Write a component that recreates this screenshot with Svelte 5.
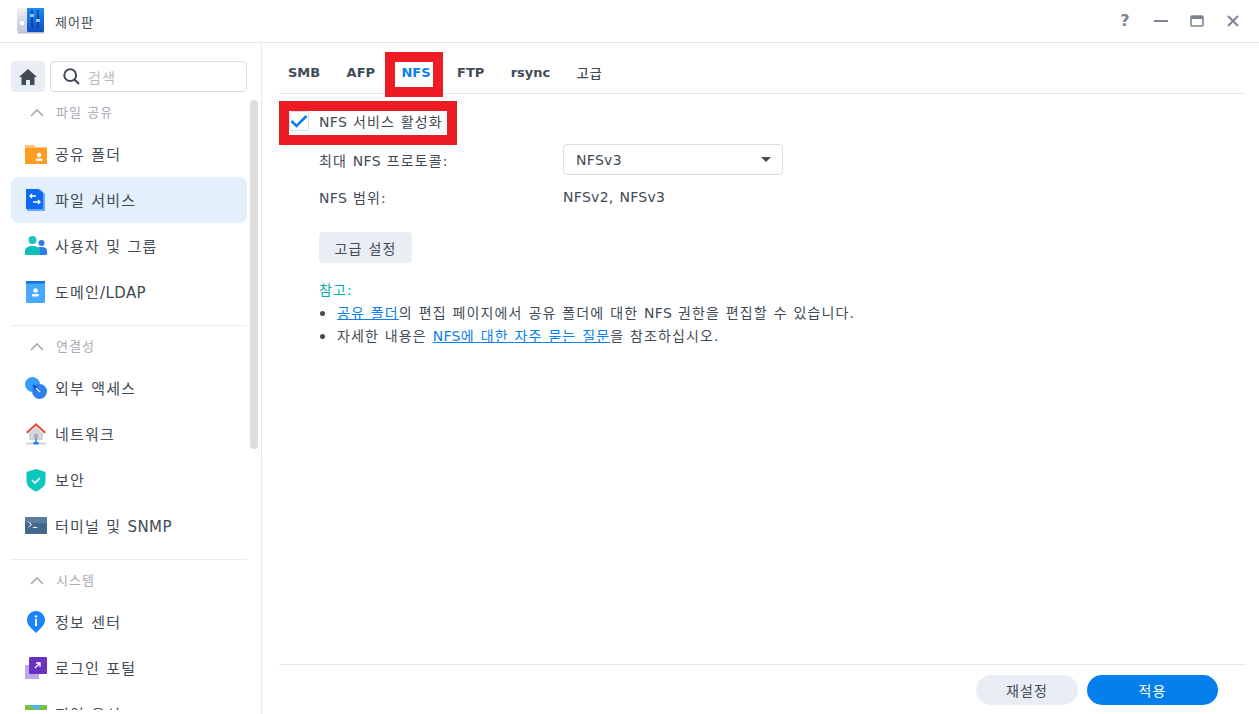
<script lang="ts">
  const groups = [
    { title: '파일 공유', items: [
      { id: 'folder', label: '공유 폴더' },
      { id: 'files', label: '파일 서비스', active: true },
      { id: 'users', label: '사용자 및 그룹' },
      { id: 'domain', label: '도메인/LDAP' },
    ]},
    { title: '연결성', items: [
      { id: 'external', label: '외부 액세스' },
      { id: 'network', label: '네트워크' },
      { id: 'security', label: '보안' },
      { id: 'terminal', label: '터미널 및 SNMP' },
    ]},
    { title: '시스템', items: [
      { id: 'info', label: '정보 센터' },
      { id: 'portal', label: '로그인 포털' },
      { id: 'region', label: '지역 옵션' },
    ]},
  ];
  const tabs = ['SMB', 'AFP', 'NFS', 'FTP', 'rsync', '고급'];

  // hangul runs get wider tracking than the latin ones
  function runs(s: string) {
    return s.split(/([\u3131-\uD7A3]+)/).filter(Boolean).map((t) => ({ t, ko: /[\u3131-\uD7A3]/.test(t) }));
  }
</script>

{#snippet txt(s)}{#each runs(s) as r}<span class:ko={r.ko}>{r.t}</span>{/each}{/snippet}

<div class="win">
  <header class="titlebar">
    <svg class="app-icon" width="28" height="26" viewBox="0 0 28 26">
      <defs>
        <linearGradient id="cpl" x1="0" y1="0" x2="0" y2="1"><stop offset="0" stop-color="#f0f0f6"/><stop offset="1" stop-color="#c3c6dc"/></linearGradient>
        <linearGradient id="cpr" x1="0" y1="0" x2="0" y2="1"><stop offset="0" stop-color="#1b8cf0"/><stop offset="1" stop-color="#0f4fc4"/></linearGradient>
      </defs>
      <rect x="0" y="0" width="11" height="24" rx="2" fill="url(#cpl)"/>
      <rect x="10" y="0" width="17" height="24" rx="1" fill="url(#cpr)"/>
      <circle cx="5" cy="15" r="3" fill="#fff" stroke="#c8c9d6"/>
      <path d="M15 2v18M21 2v18" stroke="#0b3f9e" stroke-width="1.5"/>
      <rect x="13" y="6" width="4" height="3" fill="#8fc6f5"/>
      <rect x="19" y="11" width="4" height="3" fill="#8fc6f5"/>
      <rect x="1" y="24" width="26" height="1.5" fill="#b9bccb"/>
    </svg>
    <span class="app-name">{@render txt('제어판')}</span>
    <div class="win-btns">
      <span class="help">?</span>
      <svg width="14" height="14" viewBox="0 0 14 14"><rect x="0" y="6" width="14" height="2" fill="#7b8490"/></svg>
      <svg width="14" height="14" viewBox="0 0 14 14"><rect x="1" y="2" width="12" height="10" rx="1" fill="none" stroke="#7b8490" stroke-width="1.6"/><rect x="1" y="2" width="12" height="3" fill="#7b8490"/></svg>
      <svg width="14" height="14" viewBox="0 0 14 14"><path d="M2 2l10 10M12 2L2 12" stroke="#7b8490" stroke-width="2"/></svg>
    </div>
  </header>

  <div class="body">
    <aside class="side">
      <div class="side-top">
        <button class="home" aria-label="홈">
          <svg width="18" height="16" viewBox="0 0 18 16"><path d="M9 0L0 8h2.5v8h4.5v-5h4v5h4.5V8H18z" fill="#414b55"/></svg>
        </button>
        <div class="search">
          <svg width="17" height="17" viewBox="0 0 17 17"><circle cx="7.2" cy="7.2" r="5.9" fill="none" stroke="#414b55" stroke-width="2"/><path d="M11.5 11.5L16 16" stroke="#414b55" stroke-width="2.2"/></svg>
          <span>{@render txt('검색')}</span>
        </div>
      </div>

      <div class="scroll">
        <nav class="list">
          {#each groups as g, i}
            {#if i > 0}<div class="sep"></div>{/if}
            <div class="group-title">
              <svg width="14" height="8" viewBox="0 0 14 8"><path d="M1 7l6-6 6 6" fill="none" stroke="#a6acb3" stroke-width="1.7"/></svg>
              <span class="gt">{@render txt(g.title)}</span>
            </div>
            {#each g.items as it}
              <div class="item" class:active={it.active}>
                <svg class="ico" width="24" height="24" viewBox="0 0 24 24">
                  {#if it.id === 'folder'}
                    <path d="M1 3h9l2 2h11v2H1z" fill="#ffc27a"/>
                    <rect x="1" y="6" width="22" height="16" fill="#ff9c24"/>
                    <circle cx="15" cy="13" r="2.2" fill="#fff"/>
                    <rect x="11.5" y="16.5" width="7" height="2.5" rx="1" fill="#fff"/>
                  {:else if it.id === 'files'}
                    <path d="M3 1h13l5 5v17H3z" fill="#69a6fb"/>
                    <path d="M2 1h12l5 4v16H2z" fill="#0d69f2"/>
                    <path d="M12 8H6m2-2L6 8l2 2M9 14h7m-2-2l2 2-2 2" fill="none" stroke="#fff" stroke-width="1.3"/>
                  {:else if it.id === 'users'}
                    <circle cx="8.5" cy="6" r="4" fill="#19c6c2"/>
                    <path d="M1 21v-4c0-3 3-5 7.5-5s7.5 2 7.5 5v4z" fill="#0cc0b8"/>
                    <circle cx="17.5" cy="9" r="3" fill="#2d7df0"/>
                    <path d="M16 21v-4c0-2-1-3-2-3.5 1-.5 2.5-.5 3.5-.5 3.5 0 5.5 1.5 5.5 4v4z" fill="#2d7df0"/>
                  {:else if it.id === 'domain'}
                    <rect x="2" y="1" width="19" height="22" rx="1.5" fill="#48a8fb"/>
                    <rect x="2" y="1" width="19" height="2.5" fill="#1773e6"/>
                    <circle cx="11.5" cy="10.5" r="2.3" fill="#fff"/>
                    <rect x="8" y="14" width="7" height="2.6" rx="1" fill="#fff"/>
                  {:else if it.id === 'external'}
                    <circle cx="8.5" cy="8.5" r="7.5" fill="#35a0fb"/>
                    <circle cx="15.5" cy="15.5" r="7.5" fill="#2e7ff2"/>
                    <path d="M8.5 8.5a7.5 7.5 0 0 1 7 7 7.5 7.5 0 0 1-7-7z" fill="#0c4fc4"/>
                    <path d="M12 12l4 4" stroke="#fff" stroke-width="1.3"/>
                  {:else if it.id === 'network'}
                    <path d="M12 1L2 10l1.5 1.5L12 4l8.5 7.5L22 10z" fill="#e0524a"/>
                    <path d="M5 11l7-6 7 6v7H5z" fill="#d4d6da"/>
                    <rect x="10" y="12" width="4" height="5" fill="#a8adb5"/>
                    <path d="M2 21.5h20" stroke="#c3c6cc" stroke-width="1.5"/>
                    <path d="M12 17v4" stroke="#2c7cf0" stroke-width="1.5"/>
                    <rect x="9.5" y="20" width="5" height="2.5" fill="#2c7cf0"/>
                  {:else if it.id === 'security'}
                    <path d="M12 1l9.5 3v9c0 5-4.5 8.5-9.5 10.5C7 21.5 2.5 18 2.5 13V4z" fill="#0cc7bd"/>
                    <path d="M8 12l3 3 5-5" fill="none" stroke="#fff" stroke-width="1.6"/>
                  {:else if it.id === 'terminal'}
                    <rect x="1" y="3" width="22" height="17" fill="#43688f"/>
                    <rect x="1" y="3" width="22" height="6" fill="#5a7da0"/>
                    <path d="M4.5 8l3 2.5-3 2.5M9 13.5h4" fill="none" stroke="#fff" stroke-width="1"/>
                  {:else if it.id === 'info'}
                    <path d="M12 1c5 0 9 4 9 9 0 5-4 8-9 13C7 18 3 15 3 10c0-5 4-9 9-9z" fill="#1a84fb"/>
                    <circle cx="12" cy="6.5" r="1.3" fill="#fff"/>
                    <rect x="11" y="9" width="2" height="7" fill="#fff"/>
                  {:else if it.id === 'portal'}
                    <rect x="1" y="9" width="14" height="14" fill="#c2a4ee"/>
                    <rect x="5" y="1" width="18" height="17" rx="1" fill="#6a32c0"/>
                    <path d="M11 12l5-5m-4 0h4v4" fill="none" stroke="#fff" stroke-width="1.3"/>
                  {:else}
                    <rect x="1" y="3" width="22" height="20" fill="#7ac143"/>
                    <path d="M6 3l6 6 6-6z" fill="#4db8e8"/>
                  {/if}
                </svg>
                <span class="lb">{@render txt(it.label)}</span>
              </div>
            {/each}
          {/each}
        </nav>
        <div class="thumb"></div>
      </div>
    </aside>

    <main class="main">
      <div class="tabs">
        {#each tabs as t}
          <span class="tab" class:on={t === 'NFS'}>{@render txt(t)}</span>
        {/each}
      </div>

      <div class="content">
        <label class="check-row">
          <span class="check">
            <svg width="18" height="14" viewBox="0 0 18 14"><path d="M1.5 7l5 5L16.5 2" fill="none" stroke="#0a7ff0" stroke-width="2.6"/></svg>
          </span>
          <span>{@render txt('NFS 서비스 활성화')}</span>
        </label>

        <div class="field">
          <span class="lbl">{@render txt('최대 NFS 프로토콜:')}</span>
          <div class="select">
            <span>NFSv3</span>
            <svg width="10" height="5" viewBox="0 0 10 5"><path d="M0 0h10L5 5z" fill="#414b55"/></svg>
          </div>
        </div>
        <div class="field scope">
          <span class="lbl">{@render txt('NFS 범위:')}</span>
          <span>NFSv2, NFSv3</span>
        </div>

        <button class="adv">{@render txt('고급 설정')}</button>

        <div class="note">
          <div class="note-title">{@render txt('참고:')}</div>
          <ul>
            <li><a href="#a">{@render txt('공유 폴더')}</a>{@render txt('의 편집 페이지에서 공유 폴더에 대한 NFS 권한을 편집할 수 있습니다.')}</li>
            <li>{@render txt('자세한 내용은 ')}<a href="#b">{@render txt('NFS에 대한 자주 묻는 질문')}</a>{@render txt('을 참조하십시오.')}</li>
          </ul>
        </div>
      </div>

      <footer class="foot">
        <button class="pill reset">{@render txt('재설정')}</button>
        <button class="pill apply">{@render txt('적용')}</button>
      </footer>
    </main>
  </div>

  <div class="mark mark-tab"></div>
  <div class="mark mark-check"></div>
</div>

<style>
  :global(body) { margin: 0; background: #fff; }
  .win {
    position: relative; width: 1259px; height: 714px; overflow: hidden;
    display: flex; flex-direction: column; background: #fff; color: #414b55;
    font-family: "DejaVu Sans", "Noto Sans CJK KR", sans-serif; font-size: 14px;
    word-spacing: 1.1px;
  }
  button { font-family: inherit; border: 0; cursor: pointer; word-spacing: inherit; }
  .ko { letter-spacing: 0.08em; }

  .titlebar {
    flex: none; height: 42px; display: flex; align-items: center;
    border-bottom: 1px solid #e4e9f0; padding: 0 19px 0 17px;
  }
  .app-icon { margin-right: 10px; }
  .app-name { font-size: 13px; color: #414b55; }
  .win-btns { margin-left: auto; display: flex; align-items: center; gap: 22px; }
  .help { font-size: 16px; font-weight: 700; color: #7b8490; width: 14px; text-align: center; line-height: 14px; }

  .body { flex: 1; min-height: 0; display: flex; }

  .side { flex: none; width: 261px; border-right: 1px solid #e4e9f0; padding-top: 18px; }
  .side-top { display: flex; gap: 5px; padding: 0 14px 0 11px; height: 31px; }
  .home { width: 34px; height: 31px; border-radius: 4px; background: #e9edf4; padding: 0; display: flex; align-items: center; justify-content: center; }
  .search {
    flex: 1; border: 1px solid #d5dfe8; border-radius: 4px; display: flex; align-items: center;
    gap: 8px; padding-left: 12px; color: #b5bbc2; font-size: 14px;
  }

  .scroll { position: relative; height: 610px; overflow: hidden; margin-top: 8px; }
  .thumb { position: absolute; left: 250px; top: 0; width: 8px; height: 349px; border-radius: 4px; background: #dedede; }
  .list { width: 236px; margin-left: 11px; }
  .group-title {
    height: 26px; display: flex; align-items: center; gap: 12px; padding-left: 19px;
    color: #a6acb3; font-size: 13px;
  }
  .gt { padding-bottom: 3px; }
  .sep { height: 1px; background: #e9ebf2; margin: 10px 0 8px; }
  .item {
    height: 46px; display: flex; align-items: center; gap: 7px; padding-left: 13px;
    font-size: 15px; color: #414b55; border-radius: 8px; letter-spacing: 0.4px;
  }
  .lb { padding-bottom: 2px; }
  .group-title + .item { margin-top: 5px; }
  .item.active { background: #e3f0fc; }
  .ico { flex: none; }

  .main { flex: 1; min-width: 0; display: flex; flex-direction: column; padding: 0 13px 0 17px; }
  .tabs {
    flex: none; height: 42px; display: flex; align-items: center; gap: 26.4px;
    border-bottom: 1px solid #e4e9f0; padding: 8px 0 0 9px;
    font-size: 13px; font-weight: 700; color: #414b55;
  }
  .tab .ko { font-weight: 500; }
  .tab.on { color: #0a7ff0; }

  .content { flex: 1; padding: 16px 0 0 10px; font-size: 14px; letter-spacing: 0.3px; }
  .check-row { display: flex; align-items: center; gap: 10px; height: 22px; }
  .check {
    width: 18px; height: 18px; border: 1px solid #d5dfe8; border-radius: 3px;
    display: flex; align-items: center; justify-content: center;
  }
  .field { display: flex; align-items: center; margin-left: 30px; }
  .lbl { width: 244px; }
  .field:not(.scope) { margin-top: 12px; height: 31px; }
  .scope { margin-top: 11px; height: 22px; }
  .select {
    box-sizing: border-box; width: 220px; height: 31px; border: 1px solid #d5dfe8; border-radius: 4px;
    display: flex; align-items: center; justify-content: space-between; padding: 0 11px 0 12px;
  }
  .adv {
    display: block; margin: 24px 0 0 30px; width: 93px; height: 31px; border-radius: 4px;
    background: #e9edf4; color: #414b55; font-size: 14px; padding: 0; letter-spacing: 0.3px;
  }
  .note { margin: 16px 0 0 30px; line-height: 23px; }
  .note-title { color: #00b0a8; }
  ul { margin: 0; padding: 0 0 0 18px; list-style: none; }
  li { position: relative; }
  li::before {
    content: ''; position: absolute; left: -17px; top: 9px; width: 5px; height: 5px;
    border-radius: 50%; background: #414b55;
  }
  a { color: #0a7ff0; text-decoration: underline; }

  .foot {
    flex: none; height: 39px; border-top: 1px solid #e4e9f0; display: flex; justify-content: flex-end;
    align-items: flex-start; gap: 9px; padding: 10px 28px 0 0;
  }
  .pill { height: 30px; border-radius: 15px; font-size: 14px; padding: 0; letter-spacing: 0.3px; }
  .reset { width: 102px; background: #e9edf4; color: #414b55; }
  .apply { width: 131px; background: #057feb; color: #fff; }

  .mark { position: absolute; box-sizing: border-box; border: 10px solid #ed1c24; pointer-events: none; }
  .mark-tab { left: 385px; top: 52px; width: 58px; height: 45px; }
  .mark-check { left: 279px; top: 101px; width: 178px; height: 44px; }
</style>
